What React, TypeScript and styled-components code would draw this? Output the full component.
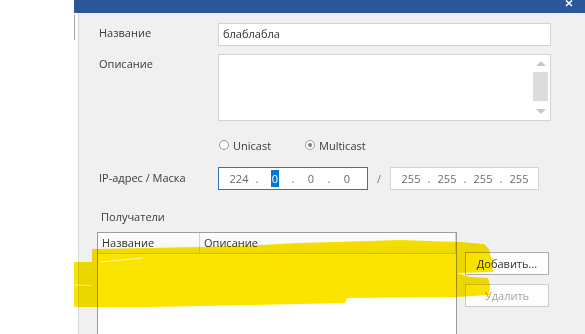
import styled, { createGlobalStyle, css } from "styled-components";

const GlobalStyle = createGlobalStyle`
  body {
    margin: 0;
    background: #ffffff;
    font-family: "Open Sans", "Noto Sans", sans-serif;
    font-size: 11px;
    color: #333333;
  }
`;

const Page = styled.div`
  position: relative;
  display: flex;
  width: 585px;
  height: 334px;
  overflow: hidden;
`;

const Side = styled.div`
  width: 74px;
  flex-shrink: 0;
  background: #ffffff;
`;

const Dialog = styled.div`
  flex: 1;
  display: flex;
  flex-direction: column;
  min-height: 0;
`;

const TitleBar = styled.div`
  flex-shrink: 0;
  height: 13px;
  background: #2b579a;
  display: flex;
  justify-content: flex-end;
  align-items: flex-start;
  padding-right: 12px;
`;

const Body = styled.div`
  flex: 1;
  display: flex;
  min-height: 0;
`;

const Gutter = styled.div`
  width: 4px;
  flex-shrink: 0;
  background: #ffffff;
  padding-top: 2px;

  &::before {
    content: "";
    display: block;
    width: 1px;
    height: 25px;
    background: #a8a8a8;
  }
`;

const Content = styled.div`
  flex: 1;
  background: #f0f0f0;
  border-left: 1px solid #d9d9d9;
  padding: 10px 0 0 20px;
`;

const Form = styled.div`
  display: grid;
  grid-template-columns: 119px 333px;
  align-items: start;
`;

const Label = styled.div<{ $top?: number }>`
  line-height: 20px;
  margin-top: ${({ $top }) => $top ?? 0}px;
  color: #3a3a3a;
  white-space: nowrap;
`;

const Cell = styled.div<{ $top?: number }>`
  margin-top: ${({ $top }) => $top ?? 0}px;
`;

const TextInput = styled.div`
  box-sizing: border-box;
  height: 23px;
  background: #ffffff;
  border: 1px solid #d3d3d3;
  padding-left: 4px;
  line-height: 20px;
  color: #333333;
`;

const TextArea = styled.div`
  box-sizing: border-box;
  height: 67px;
  background: #ffffff;
  border: 1px solid #d3d3d3;
  display: flex;
  justify-content: flex-end;
  padding: 0 1px 0 0;
`;

const ScrollBar = styled.div`
  width: 17px;
  display: flex;
  flex-direction: column;
  align-items: stretch;
  background: #ffffff;
`;

const ScrollArrow = styled.div<{ $down?: boolean }>`
  height: 17px;
  display: flex;
  align-items: center;
  justify-content: center;

  &::before {
    content: "";
    width: 0;
    height: 0;
    border-left: 5px solid transparent;
    border-right: 5px solid transparent;
    ${({ $down }) =>
      $down
        ? css`border-top: 5px solid #c8c8c8;`
        : css`border-bottom: 5px solid #c8c8c8;`}
  }
`;

const ScrollThumb = styled.div`
  height: 30px;
  margin: 0 1px 2px;
  background: #dcdcdc;
`;

const RadioRow = styled.div`
  display: flex;
  height: 14px;
  align-items: center;
  padding-left: 1px;
`;

const RadioItem = styled.label`
  display: flex;
  align-items: center;
  gap: 4px;
  width: 86px;
  color: #3a3a3a;
`;

const RadioCircle = styled.span<{ $checked?: boolean }>`
  box-sizing: border-box;
  width: 10px;
  height: 10px;
  border-radius: 50%;
  border: 1px solid #9a9a9a;
  background: #ffffff;
  display: flex;
  align-items: center;
  justify-content: center;

  &::after {
    content: "";
    width: 4px;
    height: 4px;
    border-radius: 50%;
    background: ${({ $checked }) => ($checked ? "#7a7a7a" : "transparent")};
  }
`;

const IpRow = styled.div`
  display: flex;
  align-items: center;
`;

const IpBox = styled.div<{ $focused?: boolean }>`
  box-sizing: border-box;
  width: ${({ $focused }) => ($focused ? 150 : 149)}px;
  height: 23px;
  background: #ffffff;
  border: 1px solid ${({ $focused }) => ($focused ? "#2f73b3" : "#d3d3d3")};
  padding-left: 6px;
  display: flex;
  align-items: center;
  color: #6a6a6a;
`;

const IpField = styled.span`
  width: 28px;
  text-align: center;
`;

const Selected = styled.span`
  background: #0078d7;
  color: #ffffff;
  padding: 1px 0.5px;
`;

const IpDot = styled.span`
  width: 8px;
  text-align: center;
`;

const Slash = styled.span`
  width: 22px;
  text-align: center;
  color: #7a7a7a;
`;

const Recipients = styled.div`
  margin: 20px 0 0 -2px;
`;

const SectionLabel = styled.div`
  line-height: 14px;
  padding-left: 4px;
  color: #3a3a3a;
`;

const ListRow = styled.div`
  display: flex;
  gap: 8px;
  margin-top: 8px;
`;

const ListView = styled.div`
  box-sizing: border-box;
  width: 360px;
  height: 110px;
  background: #ffffff;
  border: 1px solid #9d9d9d;
  border-bottom: none;
`;

const Header = styled.div`
  display: flex;
  height: 20px;
  background: linear-gradient(#ffffff, #f3f3f3);
  border-bottom: 1px solid #d5d5d5;
`;

const HeaderCell = styled.div<{ $width: number }>`
  box-sizing: border-box;
  width: ${({ $width }) => $width}px;
  border-right: 1px solid #d5d5d5;
  padding-left: 4px;
  line-height: 20px;
  color: #333333;
`;

const ButtonColumn = styled.div`
  display: flex;
  flex-direction: column;
  gap: 9px;
  margin-top: 20px;
`;

const Button = styled.button<{ $disabled?: boolean }>`
  box-sizing: border-box;
  width: 84px;
  height: 23px;
  padding: 0;
  font: inherit;
  background: #fdfdfd;
  border: 1px solid ${({ $disabled }) => ($disabled ? "#cccccc" : "#adadad")};
  color: ${({ $disabled }) => ($disabled ? "#a5a5a5" : "#333333")};
`;

const Marker = styled.svg`
  position: absolute;
  left: 0;
  top: 0;
  pointer-events: none;
  mix-blend-mode: multiply;
`;

const CloseIcon = () => (
  <svg width="8" height="7" viewBox="0 0 8 7">
    <path d="M1 0.5 L7 6 M7 0.5 L1 6" stroke="#ffffff" strokeWidth="1.6" />
  </svg>
);

const IpControl = ({ parts, focused }: { parts: string[]; focused?: boolean }) => (
  <IpBox $focused={focused}>
    {parts.map((p, i) => (
      <span key={i} style={{ display: "contents" }}>
        {i > 0 && <IpDot>.</IpDot>}
        <IpField>{focused && i === 1 ? <Selected>{p}</Selected> : p}</IpField>
      </span>
    ))}
  </IpBox>
);

export default function App() {
  return (
    <>
      <GlobalStyle />
      <Page>
        <Side />
        <Dialog>
          <TitleBar>
            <CloseIcon />
          </TitleBar>
          <Body>
            <Gutter />
            <Content>
              <Form>
                <Label>Название</Label>
                <TextInput>блаблабла</TextInput>

                <Label $top={8}>Описание</Label>
                <Cell $top={8}>
                  <TextArea>
                    <ScrollBar>
                      <ScrollArrow />
                      <ScrollThumb />
                      <ScrollArrow $down />
                    </ScrollBar>
                  </TextArea>
                </Cell>

                <div />
                <Cell $top={17}>
                  <RadioRow>
                    <RadioItem>
                      <RadioCircle />
                      Unicast
                    </RadioItem>
                    <RadioItem>
                      <RadioCircle $checked />
                      Multicast
                    </RadioItem>
                  </RadioRow>
                </Cell>

                <Label $top={16}>IP-адрес / Маска</Label>
                <Cell $top={15}>
                  <IpRow>
                    <IpControl parts={["224", "0", "0", "0"]} focused />
                    <Slash>/</Slash>
                    <IpControl parts={["255", "255", "255", "255"]} />
                  </IpRow>
                </Cell>
              </Form>

              <Recipients>
                <SectionLabel>Получатели</SectionLabel>
                <ListRow>
                  <ListView>
                    <Header>
                      <HeaderCell $width={102}>Название</HeaderCell>
                      <HeaderCell $width={256}>Описание</HeaderCell>
                    </Header>
                  </ListView>
                  <ButtonColumn>
                    <Button>Добавить...</Button>
                    <Button $disabled>Удалить</Button>
                  </ButtonColumn>
                </ListRow>
              </Recipients>
            </Content>
          </Body>
        </Dialog>

        <Marker width="585" height="334" viewBox="0 0 585 334">
          <g fill="#fbe400">
            <path d="M92 249 L150 248 L200 247 L260 245 L300 243 L400 240 L460 242 L484 244 L489 249 L492 262 L493 272 L457 273 L300 276 L92 262 Z" />
            <path d="M74 262 L150 262 L300 264 L440 268 L470 277 L488 278 L490 285 L489 295 L457 297 L347 298 L345 303 L300 304 L150 307 L74 307 Z" />
          </g>
          <g stroke="#fff6a0" strokeWidth="1.2" fill="none">
            <path d="M100 262 L143 258" />
            <path d="M74 285 L92 285.5" />
          </g>
        </Marker>
      </Page>
    </>
  );
}
